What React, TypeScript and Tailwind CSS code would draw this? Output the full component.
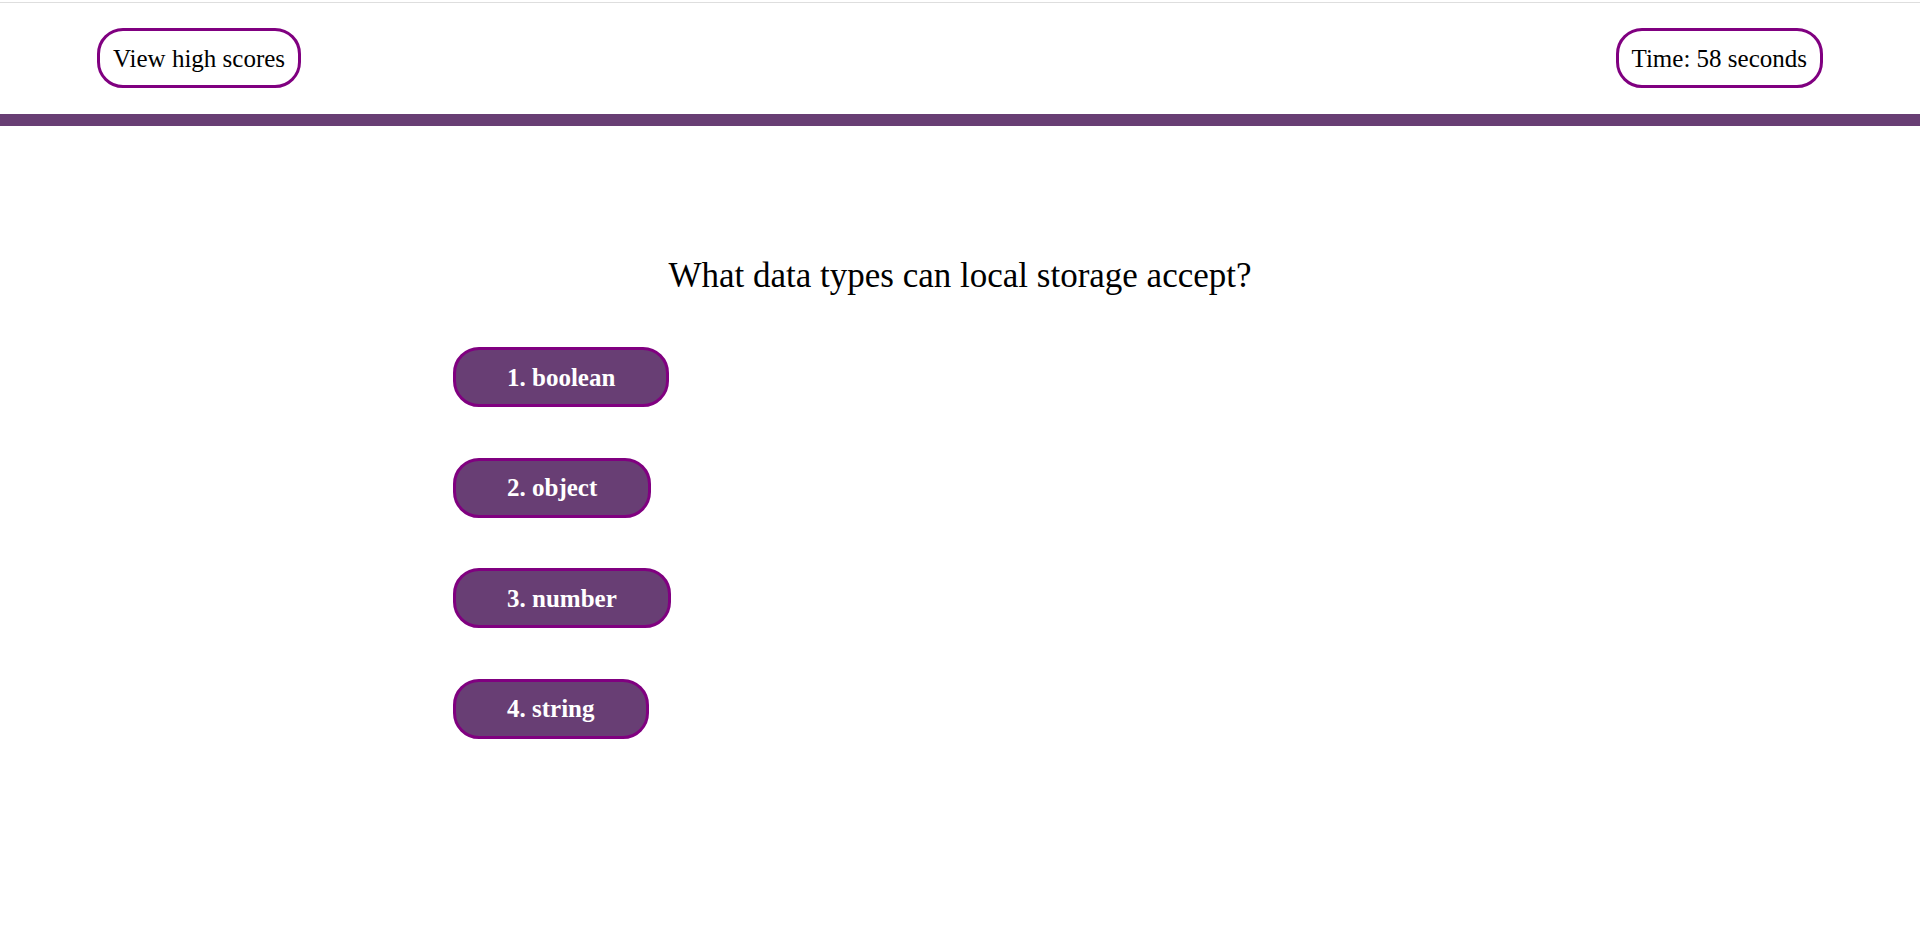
const answers = ['1. boolean', '2. object', '3. number', '4. string'];

const App = () => {
  return (
    <div className="min-h-screen bg-white text-black font-['Liberation_Serif','Times_New_Roman',serif]">
      <div className="pt-[2px]">
        <div className="h-px bg-[#dedede]" />
      </div>

      <header className="flex items-center justify-between px-[97px] pt-[25px] pb-[26px]">
        <button className="flex h-[60px] items-center rounded-[26px] border-[3px] border-[#800080] bg-white px-[13px] text-[25px] leading-none">
          View high scores
        </button>
        <div className="flex h-[60px] items-center rounded-[26px] border-[3px] border-[#800080] bg-white px-[13px] text-[25px] leading-none">
          Time: 58 seconds
        </div>
      </header>

      <div className="h-[12px] bg-[#683e74]" />

      <main className="pt-[131px]">
        <h2 className="text-center text-[35px] leading-[38px] font-normal">
          What data types can local storage accept?
        </h2>
        <div className="mt-[52px] flex flex-col items-start gap-[50.6px] pl-[453px]">
          {answers.map((a) => (
            <button
              key={a}
              className="flex h-[60px] items-center rounded-[26px] border-[3px] border-[#800080] bg-[#683e74] px-[51px] text-[25px] font-bold leading-none text-white"
            >
              {a}
            </button>
          ))}
        </div>
      </main>
    </div>
  );
};

export default App;
